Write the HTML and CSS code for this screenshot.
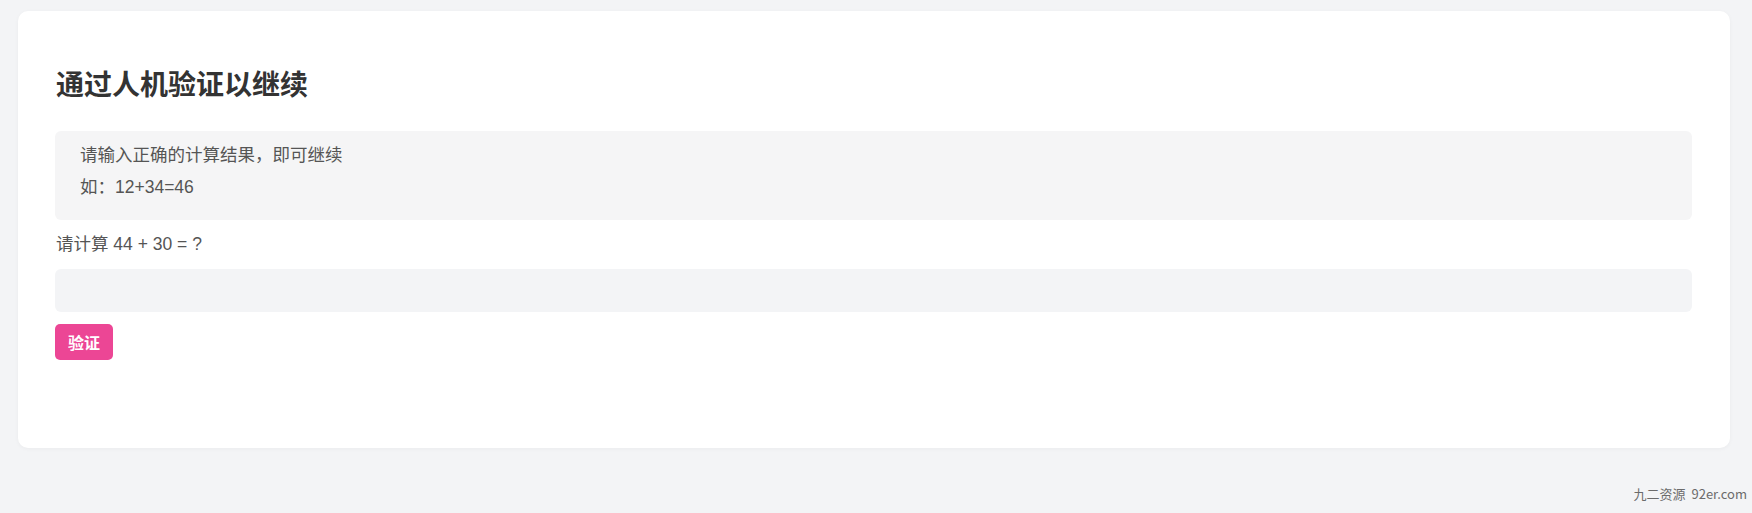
FILE: index.html
```html
<!DOCTYPE html>
<html lang="zh-CN">
<head>
<meta charset="utf-8">
<title>通过人机验证以继续</title>
<link rel="stylesheet" href="styles.css">
</head>
<body>
<main class="card">
  <h2 class="title">通过人机验证以继续</h2>
  <div class="notice">
    <p>请输入正确的计算结果，即可继续</p>
    <p>如：12+34=46</p>
  </div>
  <form class="form" onsubmit="return false">
    <label class="question" for="answer">请计算 44 + 30 = ?</label>
    <input class="answer" id="answer" type="text">
    <button class="btn" type="submit">验证</button>
  </form>
</main>
<footer class="footer">九二资源 92er.com</footer>
</body>
</html>
```
FILE: styles.css
```css
html, body {
  margin: 0;
  padding: 0;
}
body {
  background: #f3f4f6;
  font-family: "Liberation Sans", "Noto Sans CJK SC", sans-serif;
  color: #555;
  height: 513px;
  position: relative;
}
.card {
  margin: 11px 0 0 18px;
  width: 1712px;
  box-sizing: border-box;
  background: #fff;
  border-radius: 10px;
  box-shadow: 0 1px 4px rgba(0, 0, 0, 0.04);
  padding: 56px 38px 88px 37px;
}
.title {
  margin: 0 0 26px 1px;
  font-size: 28px;
  line-height: 38px;
  font-weight: 700;
  color: #333;
}
.notice {
  background: #f5f5f6;
  border-radius: 6px;
  padding: 8px 25px 17px;
}
.notice p {
  margin: 0;
  font-size: 17.5px;
  line-height: 32px;
  color: #555;
}
.form {
  display: flex;
  flex-direction: column;
  align-items: flex-start;
}
.question {
  margin: 12px 0 0 1px;
  font-size: 17.5px;
  line-height: 24px;
  color: #555;
}
.answer {
  margin-top: 13px;
  width: 100%;
  height: 43px;
  box-sizing: border-box;
  border: none;
  border-radius: 6px;
  background: #f3f4f6;
  outline: none;
  padding: 0 12px;
  font-size: 16px;
}
.btn {
  margin-top: 12px;
  width: 58px;
  height: 36px;
  border: none;
  border-radius: 5px;
  background: #ec4695;
  color: #fff;
  font-family: "Noto Sans CJK SC", sans-serif;
  font-weight: 700;
  font-size: 16px;
  padding: 0;
  cursor: pointer;
}
.footer {
  position: absolute;
  right: 5px;
  top: 485px;
  font-size: 13px;
  line-height: 18px;
  color: #6b6b6b;
  font-family: "Noto Sans CJK SC", sans-serif;
  word-spacing: 3px;
}
```
